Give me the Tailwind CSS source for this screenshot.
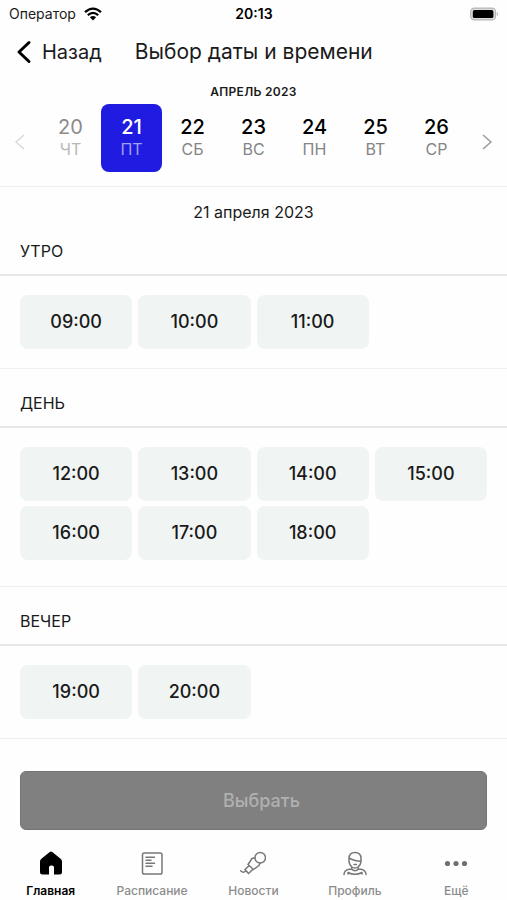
<!DOCTYPE html>
<html lang="ru">
<head>
<meta charset="utf-8">
<meta name="viewport" content="width=device-width, initial-scale=1">
<title>Выбор даты и времени</title>
<script src="https://cdn.jsdelivr.net/npm/@tailwindcss/browser@4"></script>
</head>
<body class="min-h-screen bg-[#fefefe] font-['Inter','Liberation_Sans',sans-serif] text-[#1a1a1a]">
<div class="flex min-h-screen flex-col">

  <div class="grid h-7 grid-cols-3 items-center pr-2 pl-[9px] text-sm">
    <div class="flex items-center gap-2">
      <span>Оператор</span>
      <svg class="h-[14px] w-[18px]" viewBox="0 0 18 14" fill="none" stroke="#000" stroke-width="2.3" aria-hidden="true"><path d="M1 5.2Q9-2 17 5.2M3.800 8.2Q9 3.600 14.200 8.2"/><path d="M9 13.400 5.900 10.300Q9 7.900 12.100 10.300Z" fill="#000" stroke="none"/></svg>
    </div>
    <span class="text-center font-semibold text-black">20:13</span>
    <svg class="h-[14px] w-[29px] justify-self-end" viewBox="0 0 31 14" aria-hidden="true"><rect x=".7" y=".7" width="26.6" height="12.6" rx="4" fill="#ddd" stroke="#b5b5b5" stroke-width="1.2"/><rect x="3" y="2.8" width="22" height="8.6" rx="1.8" fill="#000"/><path d="M28.700 4.800q2.600 2.200 0 4.400z" fill="#aaa"/></svg>
  </div>

  <header class="flex h-12 items-center px-4 text-xl">
    <button type="button" class="flex items-center gap-2.5">
      <svg class="h-6 w-4" viewBox="0 0 16 24" fill="none" stroke="#000" stroke-width="3" stroke-linecap="round" stroke-linejoin="round" aria-hidden="true"><path d="M13 2.500 3 12l10 9.500"/></svg>
      <span>Назад</span>
    </button>
    <h1 class="ml-[33px] whitespace-nowrap text-[21px]">Выбор даты и времени</h1>
  </header>

  <section class="border-b border-[#f0f0f0] pt-2 pb-[14px]">
    <h2 class="h-5 text-center text-xs leading-4 font-semibold tracking-wide">АПРЕЛЬ 2023</h2>
    <div class="flex">
      <button type="button" aria-label="Назад по датам" class="flex w-10 items-center justify-center pt-2"><svg class="h-4 w-[10px]" viewBox="0 0 10 16" fill="none" stroke="#d8d8d8" stroke-width="1.500"><path d="M9 1 1 8l8 7"/></svg></button>
      <div class="grid flex-1 grid-cols-7 text-base leading-5 text-[#858585]">
        <button type="button" class="flex h-[68px] flex-col items-center justify-center pb-0.5 text-[#b8b8b8]"><span class="text-xl leading-6 text-[#8b8b8b]">20</span>ЧТ</button>
        <button type="button" aria-pressed="true" class="flex h-[68px] flex-col items-center justify-center rounded-lg bg-[#1f1be0] pb-0.5 text-[#a3a0f2]"><span class="text-xl leading-6 font-medium text-white">21</span>ПТ</button>
        <button type="button" class="flex h-[68px] flex-col items-center justify-center pb-0.5"><span class="text-xl leading-6 font-medium text-black">22</span>СБ</button>
        <button type="button" class="flex h-[68px] flex-col items-center justify-center pb-0.5"><span class="text-xl leading-6 font-medium text-black">23</span>ВС</button>
        <button type="button" class="flex h-[68px] flex-col items-center justify-center pb-0.5"><span class="text-xl leading-6 font-medium text-black">24</span>ПН</button>
        <button type="button" class="flex h-[68px] flex-col items-center justify-center pb-0.5"><span class="text-xl leading-6 font-medium text-black">25</span>ВТ</button>
        <button type="button" class="flex h-[68px] flex-col items-center justify-center pb-0.5"><span class="text-xl leading-6 font-medium text-black">26</span>СР</button>
      </div>
      <button type="button" aria-label="Вперёд по датам" class="flex w-10 items-center justify-center pt-2"><svg class="h-4 w-[10px]" viewBox="0 0 10 16" fill="none" stroke="#999" stroke-width="1.500"><path d="m1 1 8 7-8 7"/></svg></button>
    </div>
  </section>

  <main>
    <p class="pt-[13px] text-center text-base leading-6">21 апреля 2023</p>
    <section class="border-b border-[#f0f0f0]">
      <h3 class="border-b-2 border-[#e6e6e6] px-5 pt-[15px] pb-[11px] text-base leading-6">УТРО</h3>
      <div class="grid grid-cols-4 gap-x-1.5 gap-y-[5px] px-5 py-[19px] text-lg font-medium">
        <button type="button" class="h-[54px] rounded-lg bg-[#f0f4f3]">09:00</button>
        <button type="button" class="h-[54px] rounded-lg bg-[#f0f4f3]">10:00</button>
        <button type="button" class="h-[54px] rounded-lg bg-[#f0f4f3]">11:00</button>
      </div>
    </section>
    <section class="border-b border-[#f0f0f0]">
      <h3 class="border-b-2 border-[#e6e6e6] px-5 pt-[22px] pb-[11px] text-base leading-6">ДЕНЬ</h3>
      <div class="grid grid-cols-4 gap-x-1.5 gap-y-[5px] px-5 pt-[19px] pb-[26px] text-lg font-medium">
        <button type="button" class="h-[54px] rounded-lg bg-[#f0f4f3]">12:00</button>
        <button type="button" class="h-[54px] rounded-lg bg-[#f0f4f3]">13:00</button>
        <button type="button" class="h-[54px] rounded-lg bg-[#f0f4f3]">14:00</button>
        <button type="button" class="h-[54px] rounded-lg bg-[#f0f4f3]">15:00</button>
        <button type="button" class="h-[54px] rounded-lg bg-[#f0f4f3]">16:00</button>
        <button type="button" class="h-[54px] rounded-lg bg-[#f0f4f3]">17:00</button>
        <button type="button" class="h-[54px] rounded-lg bg-[#f0f4f3]">18:00</button>
      </div>
    </section>
    <section class="border-b border-[#f0f0f0]">
      <h3 class="border-b-2 border-[#e6e6e6] px-5 pt-[22px] pb-[11px] text-base leading-6">ВЕЧЕР</h3>
      <div class="grid grid-cols-4 gap-x-1.5 gap-y-[5px] px-5 py-[19px] text-lg font-medium">
        <button type="button" class="h-[54px] rounded-lg bg-[#f0f4f3]">19:00</button>
        <button type="button" class="h-[54px] rounded-lg bg-[#f0f4f3]">20:00</button>
      </div>
    </section>
  </main>

  <div class="mt-auto px-5">
    <button type="button" disabled class="h-[59px] w-full rounded-md border border-[#747474] bg-[#808080] pl-4 text-lg font-medium text-[#b0b0b0]">Выбрать</button>
  </div>

  <nav class="grid h-[70px] grid-cols-5 pt-5 text-xs leading-4 font-medium text-[#8c8c8c]">
    <a href="#" aria-current="page" class="flex flex-col items-center gap-[7px] font-semibold text-black">
      <svg class="size-[26px]" viewBox="0 0 26 26" aria-hidden="true"><path d="M11.400 2.200q1.600-1.200 3.200 0l8 6.500Q24 10 24 11.500V22q0 2.500-2.500 2.500H16v-7q0-2-2-2h-1q-2 0-2 2v7H4.500Q2 24.500 2 22V11.500Q2 10 3.400 8.700z" fill="#000"/></svg>
      Главная
    </a>
    <a href="#" class="flex flex-col items-center gap-[7px]">
      <svg class="size-[26px]" viewBox="0 0 26 26" fill="none" stroke="#777" stroke-width="1.500" stroke-linecap="round" aria-hidden="true"><rect x="3.500" y="3" width="19.500" height="21" rx="1.800"/><path d="M7 7.200h8.500M7 10.200h5M7 13.200h8.500M7 16.200h6"/></svg>
      Расписание
    </a>
    <a href="#" class="flex flex-col items-center gap-[7px]">
      <svg class="size-[26px]" viewBox="0 0 26 26" fill="none" stroke="#777" stroke-width="1.500" stroke-linecap="round" stroke-linejoin="round" aria-hidden="true"><circle cx="20.200" cy="7.800" r="5.300"/><path d="M14.900 7.800 12 8.500 8 14.500l5.500 5 5.500-4 1-2.500M9 15.700 5 19.500l3.500 4 4.500-4.200M5.800 20.500Q4 24 .500 20.800"/></svg>
      Новости
    </a>
    <a href="#" class="flex flex-col items-center gap-[7px]">
      <svg class="size-[26px]" viewBox="0 0 26 26" fill="none" stroke="#777" stroke-width="1.500" stroke-linecap="round" stroke-linejoin="round" aria-hidden="true"><path d="M7 11V8.500Q7 2.500 13 2.500T19 8.500V11q0 3.500-3 6-3 2-6 0-3-2.500-3-6ZM7 7.800q4.500 3.200 12 3.400M12 14.500h2.500M9.800 17v2M16.200 17v2M2 24.500q.3-4.500 5-5.300l2.500-.2q3.500 3.500 7 0l2.500.2q4.700.8 5 5.300M6 24v-1.500q7 3.500 14 0V24"/></svg>
      Профиль
    </a>
    <a href="#" class="flex flex-col items-center gap-[7px]">
      <svg class="size-[26px]" viewBox="0 0 26 26" fill="#707070" aria-hidden="true"><circle cx="4.500" cy="13.500" r="2.600"/><circle cx="13" cy="13.500" r="2.600"/><circle cx="21.500" cy="13.500" r="2.600"/></svg>
      Ещё
    </a>
  </nav>
</div>
</body>
</html>
